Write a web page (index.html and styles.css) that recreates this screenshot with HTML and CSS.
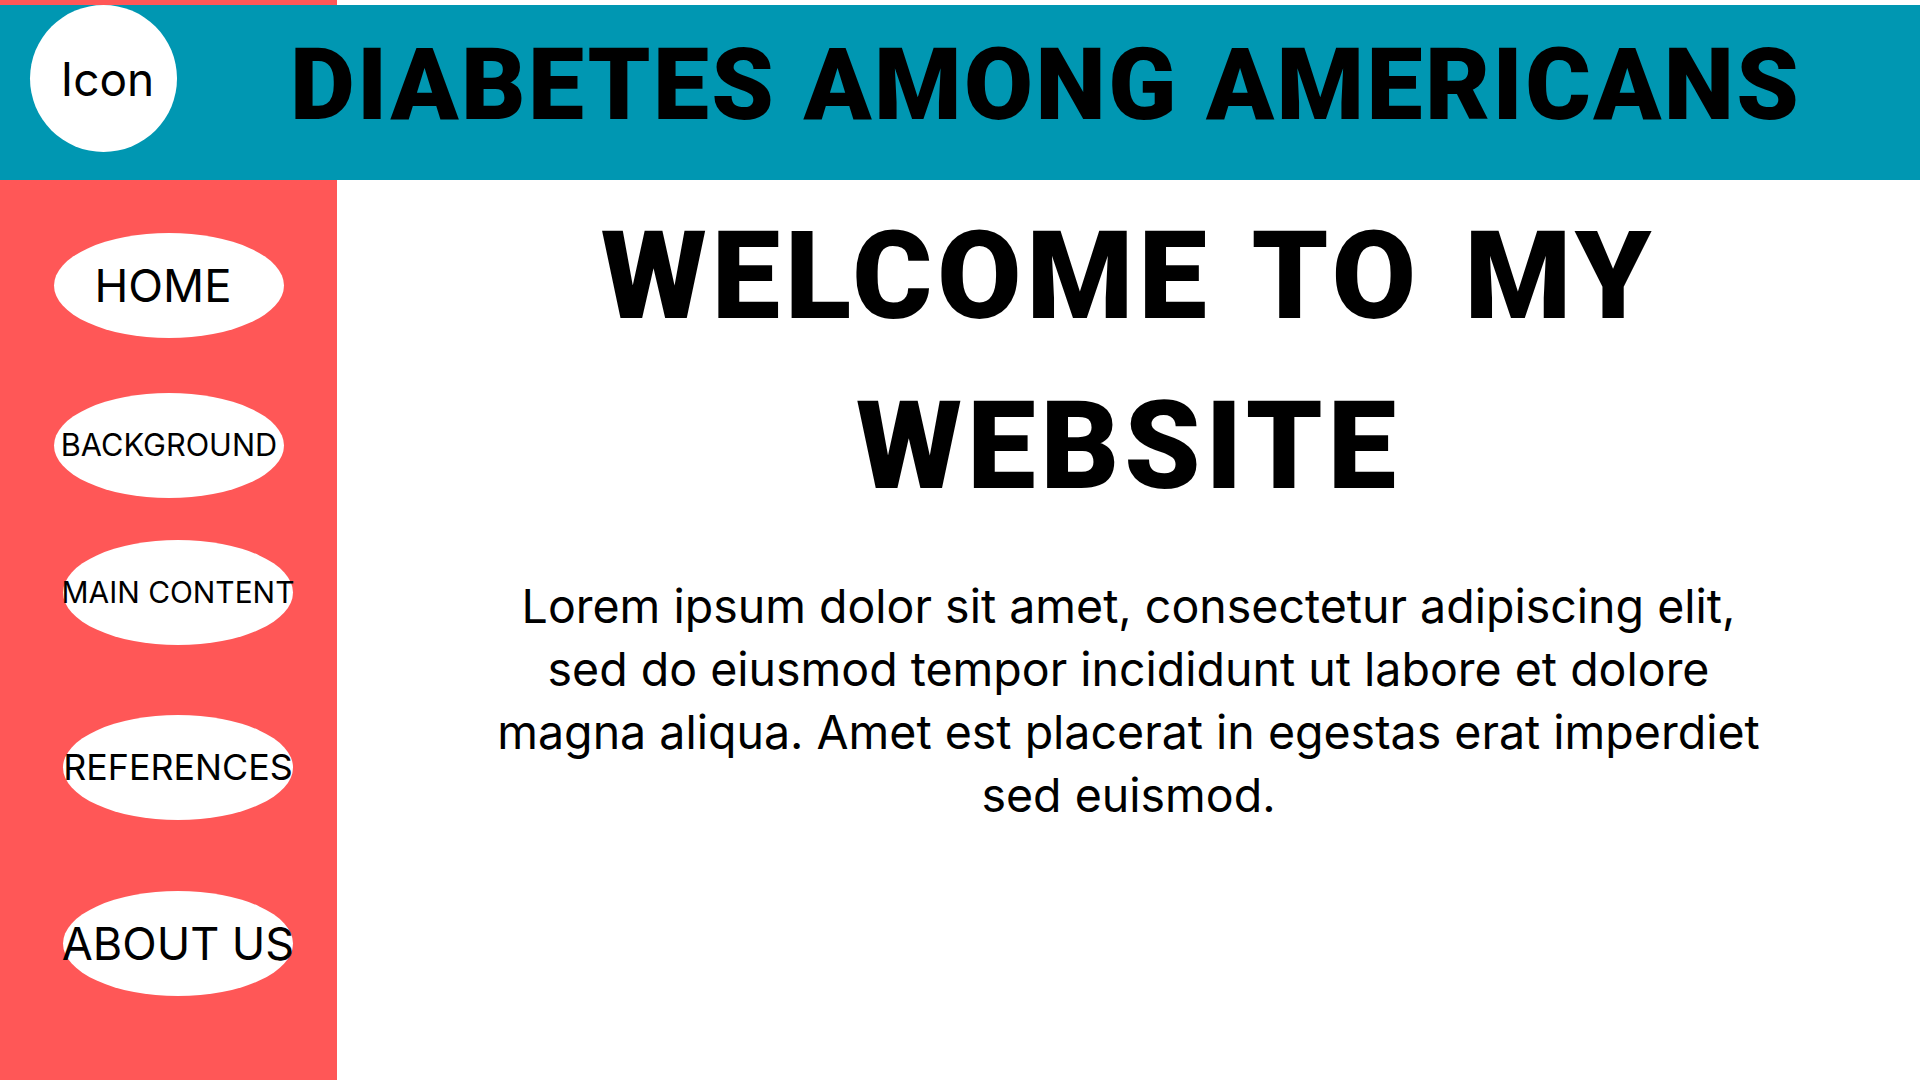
FILE: index.html
```html
<!DOCTYPE html>
<html lang="en">
<head>
<meta charset="utf-8">
<title>Diabetes Among Americans</title>
<link rel="stylesheet" href="styles.css">
</head>
<body>
<div class="page">
  <div class="top-strip"><div class="top-strip-red"></div></div>
  <header class="header">
    <div class="logo">Icon</div>
    <h1 class="site-title">DIABETES AMONG AMERICANS</h1>
  </header>
  <div class="layout">
    <nav class="sidebar">
      <a class="nav-pill nav-home" href="#">HOME</a>
      <a class="nav-pill nav-background" href="#">BACKGROUND</a>
      <a class="nav-pill nav-main" href="#">MAIN CONTENT</a>
      <a class="nav-pill nav-references" href="#">REFERENCES</a>
      <a class="nav-pill nav-about" href="#">ABOUT US</a>
    </nav>
    <main class="content">
      <h2 class="welcome">WELCOME TO MY<br>WEBSITE</h2>
      <p class="intro">Lorem ipsum dolor sit amet, consectetur adipiscing elit, sed do eiusmod tempor incididunt ut labore et dolore magna aliqua. Amet est placerat in egestas erat imperdiet sed euismod.</p>
    </main>
  </div>
</div>
</body>
</html>
```
FILE: styles.css
```css
html, body {
  margin: 0;
  padding: 0;
  background: #ffffff;
}

.page {
  width: 1920px;
  height: 1080px;
  display: flex;
  flex-direction: column;
  overflow: hidden;
  color: #000000;
}

.top-strip {
  height: 5px;
  display: flex;
  flex: none;
}

.top-strip-red {
  width: 337px;
  background: #ff5757;
}

.header {
  height: 175px;
  flex: none;
  background: #0097b2;
  display: flex;
  align-items: flex-start;
}

.logo {
  margin-left: 30px;
  width: 147px;
  height: 147px;
  border-radius: 50%;
  background: #ffffff;
  display: flex;
  align-items: center;
  justify-content: center;
  font-family: Inter, sans-serif;
  font-size: 46px;
  line-height: 1;
  padding-left: 8px;
  box-sizing: border-box;
}

.site-title {
  margin: 30px 0 0 113px;
  font-family: Roboto, sans-serif;
  font-weight: 900;
  font-size: 100px;
  line-height: 1;
  letter-spacing: 2.4px;
  white-space: nowrap;
}

.layout {
  flex: 1;
  display: flex;
}

.sidebar {
  width: 337px;
  flex: none;
  background: #ff5757;
  display: flex;
  flex-direction: column;
  padding-top: 53px;
  box-sizing: border-box;
}

.nav-pill {
  width: 230px;
  height: 105px;
  border-radius: 50%;
  background: #ffffff;
  display: flex;
  align-items: center;
  justify-content: center;
  color: #000000;
  text-decoration: none;
  font-family: Inter, sans-serif;
  line-height: 1;
  white-space: nowrap;
  flex: none;
}

.nav-home {
  margin-left: 54px;
  font-size: 45.5px;
  padding-right: 12px;
  box-sizing: border-box;
}

.nav-background {
  margin-left: 54px;
  margin-top: 55px;
  font-size: 30.7px;
}

.nav-main {
  margin-left: 63px;
  margin-top: 42px;
  font-size: 29.9px;
}

.nav-references {
  margin-left: 63px;
  margin-top: 70px;
  font-size: 35.8px;
}

.nav-about {
  margin-left: 63px;
  margin-top: 71px;
  font-size: 45px;
}

.content {
  flex: 1;
  text-align: center;
  padding-top: 12px;
}

.welcome {
  margin: 0;
  font-family: Roboto, sans-serif;
  font-weight: 900;
  font-size: 122px;
  line-height: 170px;
  letter-spacing: 5px;
  word-spacing: 8px;
}

.intro {
  width: 1292px;
  margin: 43px auto 0;
  font-family: Inter, sans-serif;
  font-size: 46.5px;
  line-height: 63px;
}
```
